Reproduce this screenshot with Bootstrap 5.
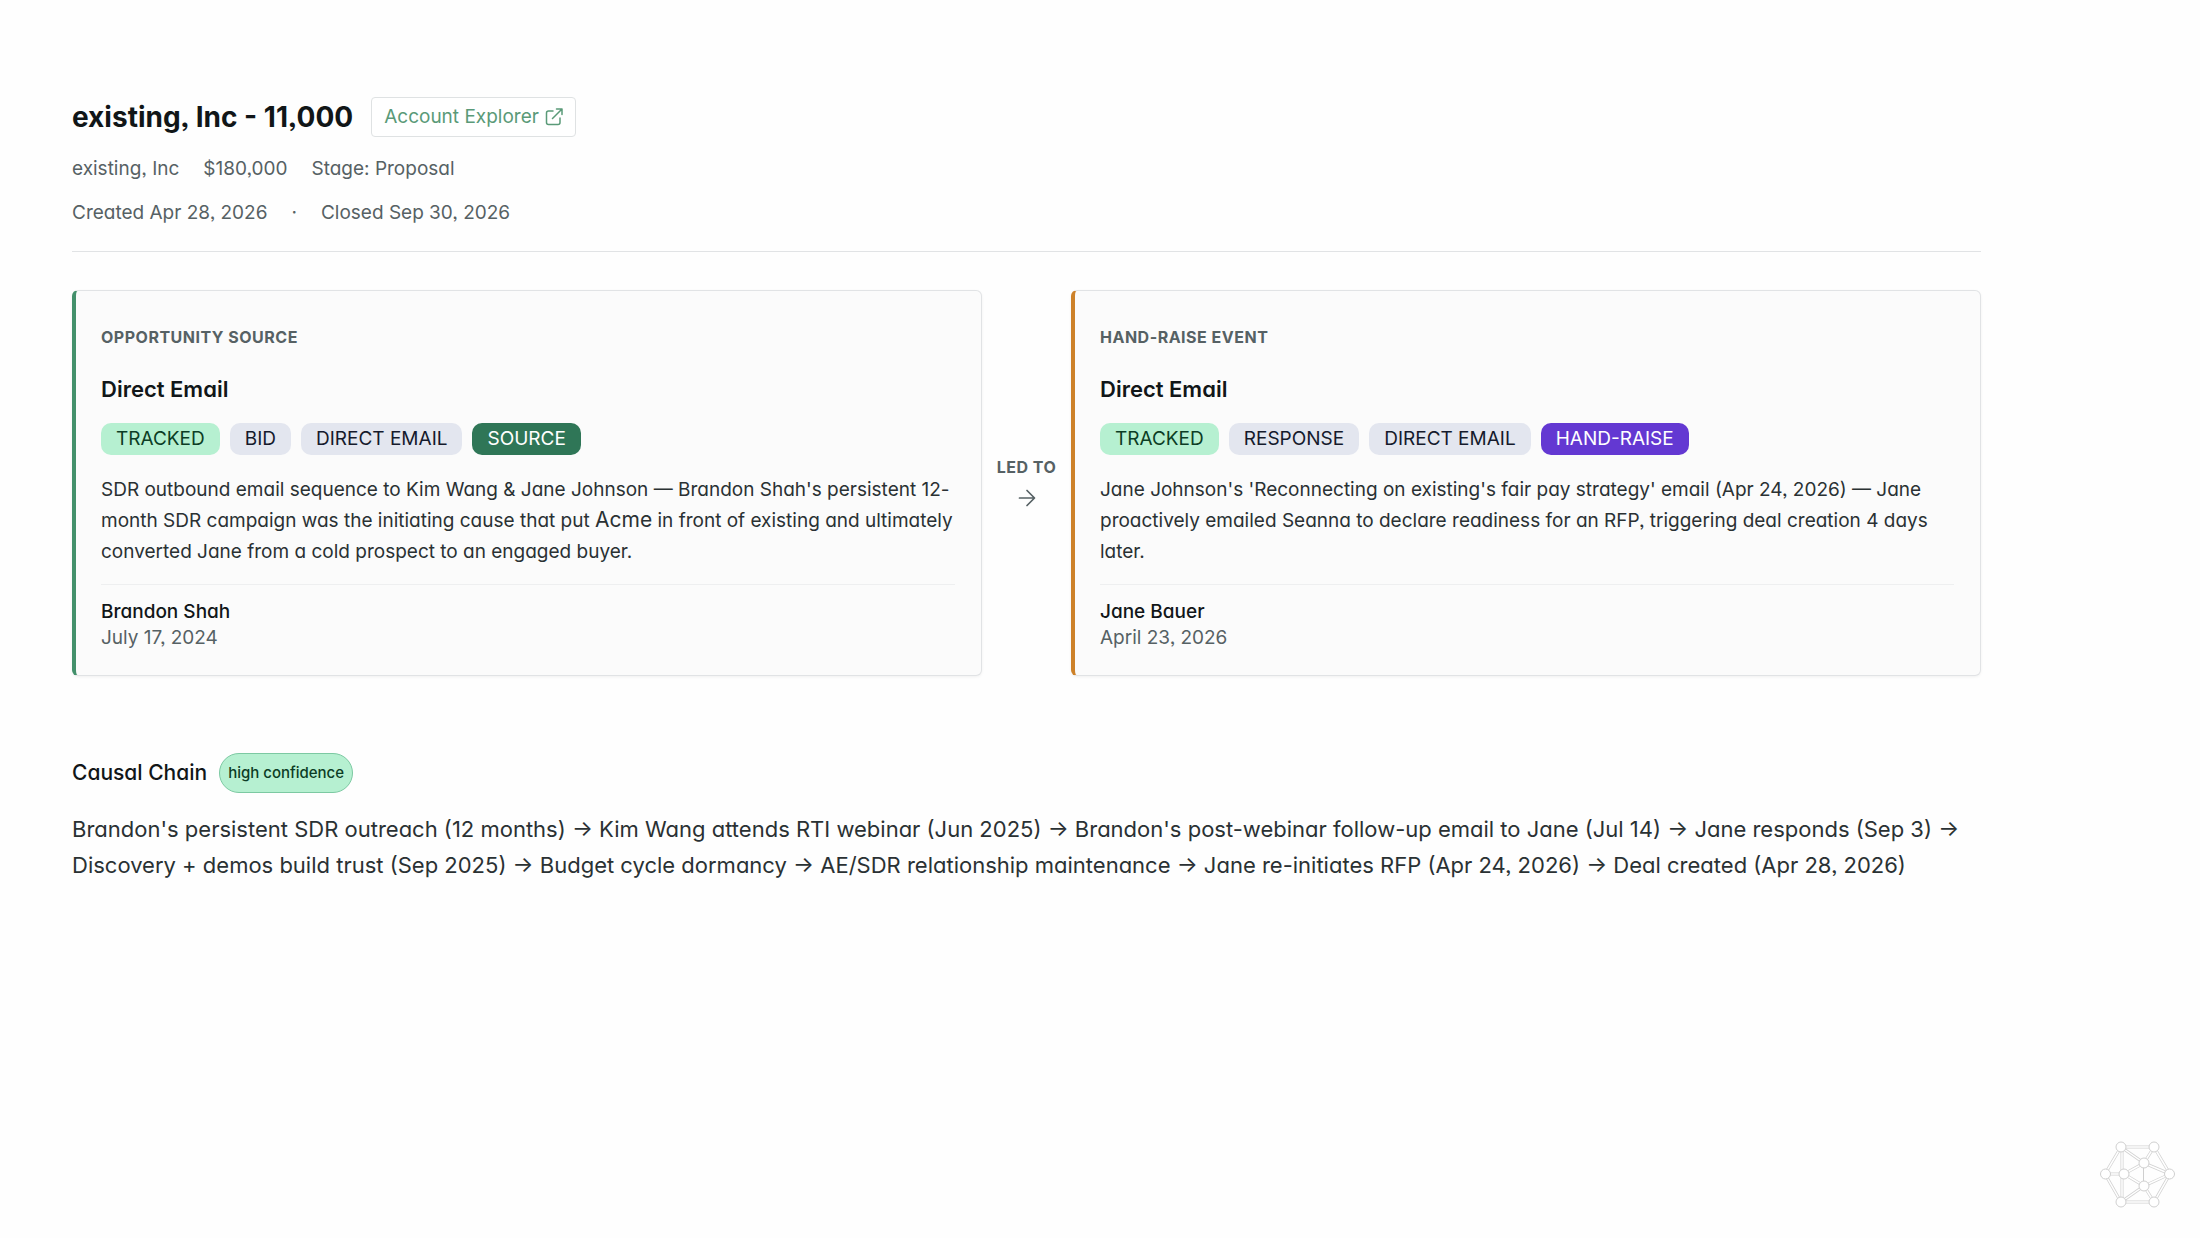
<!DOCTYPE html>
<html lang="en">
<head>
<meta charset="utf-8">
<meta name="viewport" content="width=device-width, initial-scale=1">
<title>existing, Inc - 11,000</title>
<link href="https://cdn.jsdelivr.net/npm/bootstrap@5.3.0/dist/css/bootstrap.min.css" rel="stylesheet">
<style>
  body { font-family: Inter, "Liberation Sans", sans-serif; font-feature-settings: "cv11", "ss03"; font-size: 19px; line-height: 26px; color: #2a3133; background: #fefefe; }
  .deal-page { padding: 96px 219px 40px 72px; }
  .title-row { column-gap: 18px; }
  .deal-title { font-size: 28px; line-height: 42px; font-weight: 700; color: #111618; }
  .ink-muted { color: #566164; }
  .explorer-btn { font-size: 19px; line-height: 26px; padding: 6px 12px; column-gap: 6px; color: #5a9a78; background: #fff; border: 1px solid #dfe2e3; border-radius: 4px; }
  .explorer-btn:hover { color: #2f7657; border-color: #5a9a78; }
  .deal-header { padding-bottom: 25px; border-bottom: 1px solid #e1e3e5; margin-bottom: 38px; }
  .meta-row { column-gap: 24px; line-height: 27px; margin-top: 17px; }
  .event-card { background: #fbfbfb; border: 1px solid #e1e3e5; border-left: 4px solid #43906b; border-radius: 6px; padding: 32px 26px 24px 25px; box-shadow: 0 1px 3px rgba(0, 0, 0, .06); }
  .event-card.hand-raise { border-left-color: #cd8129; }
  .eyebrow { font-size: 16px; line-height: 28px; font-weight: 700; color: #566164; letter-spacing: .5px; }
  .card-label { margin-bottom: 22px; }
  .event-title { font-size: 22px; line-height: 32px; font-weight: 600; color: #111618; margin-bottom: 18px; }
  .tag-row { gap: 10px; margin-bottom: 19px; }
  .tag { font-size: 19px; line-height: 32px; padding: 0 15px; border-radius: 10px; background: #e3e6ef; color: #151a2c; }
  .tag-tracked { background: #b6f0d1; color: #0c3d25; }
  .tag-source { background: #2f7657; color: #fff; }
  .tag-raise { background: #6338d2; color: #fff; }
  .event-text { line-height: 31px; margin-bottom: 17px; }
  .account-name { font-size: 21px; line-height: 1; }
  .person { border-top: 1px solid #eeeff0; padding-top: 14px; }
  .person-name { color: #111618; font-weight: 500; }
  .led-to { width: 89px; padding-bottom: 6px; }
  .chain-section { margin-top: 77px; }
  .chain-head { column-gap: 12px; margin-bottom: 18px; }
  .chain-title { font-size: 21px; line-height: 40px; font-weight: 500; color: #111618; }
  .confidence { font-size: 15px; line-height: 38px; font-weight: 500; padding: 0 8px; border: 1px solid #7cc9a2; border-radius: 20px; background: #b6f0d1; color: #0c3d25; }
  .chain-text { font-size: 22px; line-height: 36px; }
  .graph-logo { right: 25px; bottom: 29px; }
</style>
</head>
<body>
<main class="deal-page">
  <header class="deal-header">
    <div class="d-flex align-items-center title-row">
      <h1 class="deal-title mb-0">existing, Inc - 11,000</h1>
      <a href="#" class="btn explorer-btn d-inline-flex align-items-center">Account Explorer
        <svg width="18" height="18" viewBox="0 0 18 18" fill="none" stroke="currentColor" stroke-width="1.5" stroke-linecap="round" stroke-linejoin="round" aria-hidden="true"><path d="M8 3H3.500Q1.500 3 1.500 5V14.500Q1.500 16.500 3.500 16.500H13Q15 16.500 15 14.500V10"/><path d="M11.500 1H17V6.500M17 1L7.500 10.500"/></svg>
      </a>
    </div>
    <div class="d-flex meta-row ink-muted"><span>existing, Inc</span><span>$180,000</span><span>Stage: Proposal</span></div>
    <div class="d-flex meta-row ink-muted"><span>Created Apr 28, 2026</span><span>·</span><span>Closed Sep 30, 2026</span></div>
  </header>

  <section class="d-flex align-items-stretch">
    <article class="event-card flex-fill w-50">
      <h2 class="eyebrow card-label">OPPORTUNITY SOURCE</h2>
      <h3 class="event-title">Direct Email</h3>
      <div class="d-flex flex-wrap tag-row"><span class="tag tag-tracked">TRACKED</span><span class="tag">BID</span><span class="tag">DIRECT EMAIL</span><span class="tag tag-source">SOURCE</span></div>
      <p class="event-text">SDR outbound email sequence to Kim Wang &amp; Jane Johnson — Brandon Shah's persistent 12-month SDR campaign was the initiating cause that put <span class="account-name">Acme</span> in front of existing and ultimately converted Jane from a cold prospect to an engaged buyer.</p>
      <div class="person"><div class="person-name">Brandon Shah</div><div class="ink-muted">July 17, 2024</div></div>
    </article>
    <div class="led-to flex-shrink-0 d-flex flex-column align-items-center justify-content-center">
      <span class="eyebrow text-nowrap">LED TO</span>
      <svg class="mt-2 ink-muted" width="18" height="18" viewBox="0 0 18 18" fill="none" stroke="currentColor" stroke-width="1.700" stroke-linecap="round" stroke-linejoin="round" aria-hidden="true"><path d="M1.500 9H16M9 1.500L16.500 9L9 16.500"/></svg>
    </div>
    <article class="event-card hand-raise flex-fill w-50">
      <h2 class="eyebrow card-label">HAND-RAISE EVENT</h2>
      <h3 class="event-title">Direct Email</h3>
      <div class="d-flex flex-wrap tag-row"><span class="tag tag-tracked">TRACKED</span><span class="tag">RESPONSE</span><span class="tag">DIRECT EMAIL</span><span class="tag tag-raise">HAND-RAISE</span></div>
      <p class="event-text">Jane Johnson's 'Reconnecting on existing's fair pay strategy' email (Apr 24, 2026) — Jane proactively emailed Seanna to declare readiness for an RFP, triggering deal creation 4 days later.</p>
      <div class="person"><div class="person-name">Jane Bauer</div><div class="ink-muted">April 23, 2026</div></div>
    </article>
  </section>

  <section class="chain-section">
    <div class="d-flex align-items-center chain-head"><h2 class="chain-title mb-0">Causal Chain</h2><span class="confidence">high confidence</span></div>
    <p class="chain-text mb-0">Brandon's persistent SDR outreach (12 months) → Kim Wang attends RTI webinar (Jun 2025) → Brandon's post-webinar follow-up email to Jane (Jul 14) → Jane responds (Sep 3) → Discovery + demos build trust (Sep 2025) → Budget cycle dormancy → AE/SDR relationship maintenance → Jane re-initiates RFP (Apr 24, 2026) → Deal created (Apr 28, 2026)</p>
  </section>
</main>
<svg class="graph-logo position-fixed" width="75" height="69" viewBox="0 0 75 69" fill="none" aria-hidden="true">
  <defs><path id="edges" d="M21 7H54L70 34L54 62H21L5 34ZM22 7V62M5 34H24M24 34L44 23L70 34M24 34L44 46L70 34M21 7L44 23L54 7M21 62L44 46L54 62"/></defs>
  <use href="#edges" stroke="#d2d2d2" stroke-width="3"/>
  <use href="#edges" stroke="#fff" stroke-width="1.500"/>
  <path d="M43.500 23V46" stroke="#cfcfcf"/>
  <g fill="#fff" stroke="#cfcfcf" stroke-width="1"><circle cx="21" cy="7" r="5"/><circle cx="54" cy="7" r="5"/><circle cx="69.500" cy="34" r="5"/><circle cx="54" cy="62" r="5"/><circle cx="21" cy="62" r="5"/><circle cx="5.500" cy="34" r="5"/><circle cx="24" cy="34" r="5"/><circle cx="44" cy="23" r="5"/><circle cx="44" cy="46" r="5"/></g>
</svg>
<script src="https://cdn.jsdelivr.net/npm/bootstrap@5.3.0/dist/js/bootstrap.bundle.min.js"></script>
</body>
</html>
